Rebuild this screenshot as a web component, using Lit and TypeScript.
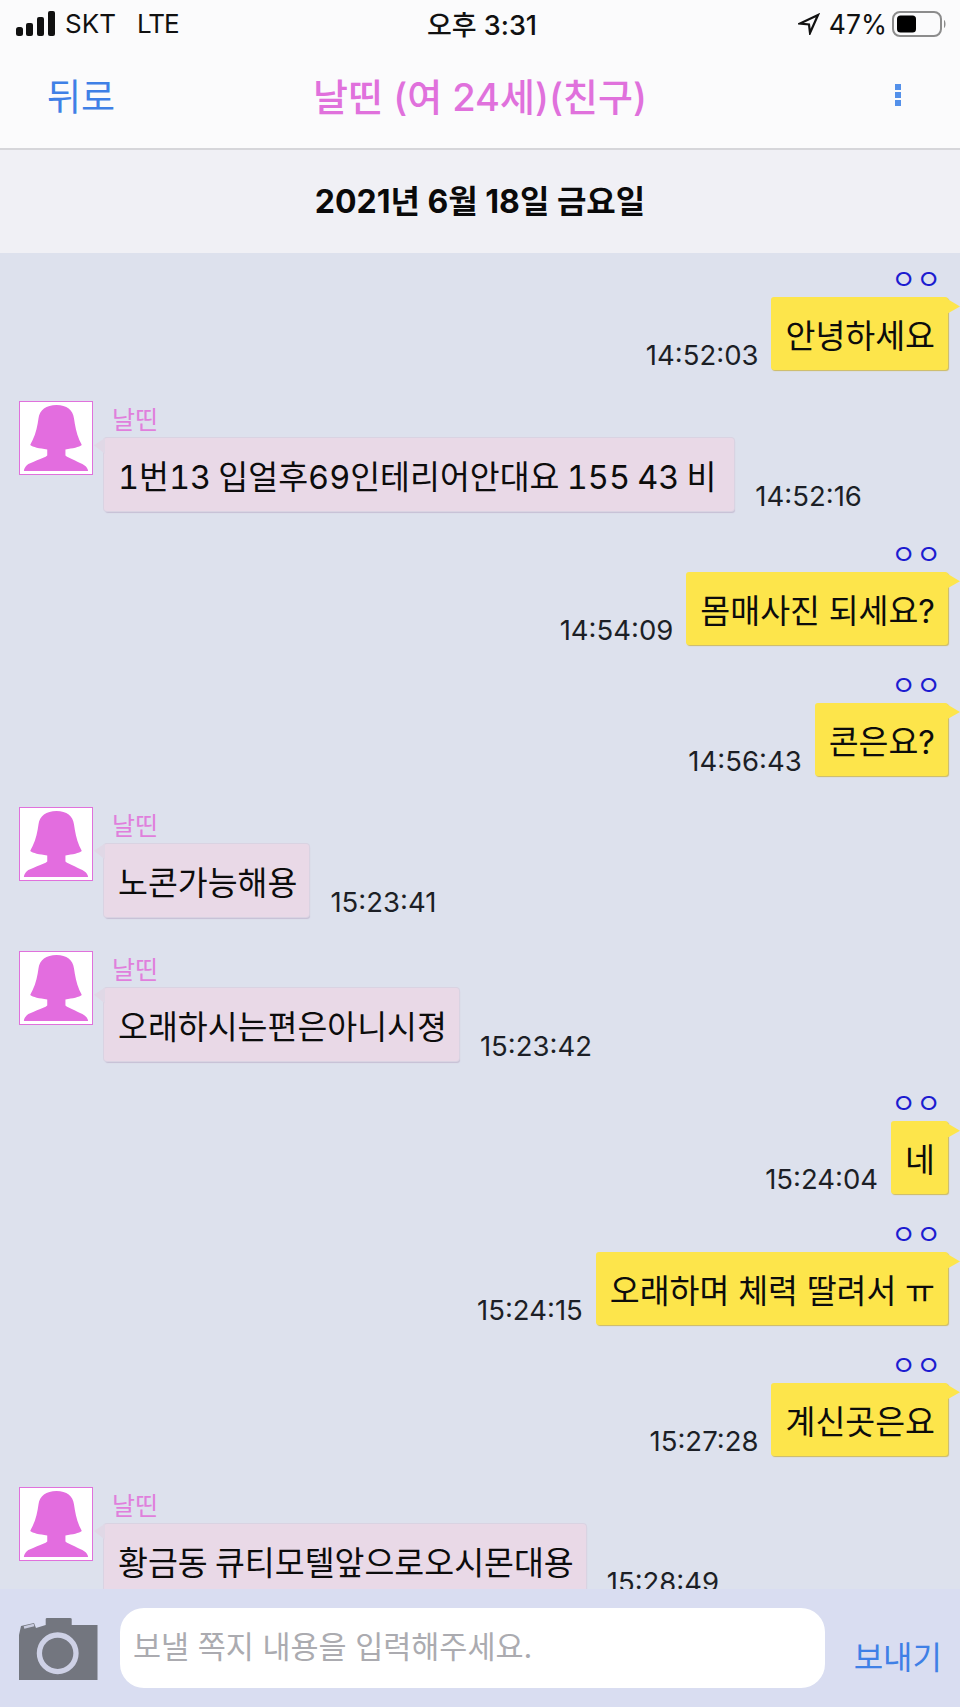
import { LitElement, html, css } from "lit";
import { customElement } from "lit/decorators.js";

type Msg = { me: boolean; text: string; time: string };

const MSGS: Msg[] = [
  { me: true, text: "안녕하세요", time: "14:52:03" },
  { me: false, text: "1번13 입얼후69인테리어안대요 155 43 비\u2009", time: "14:52:16" },
  { me: true, text: "몸매사진 되세요?", time: "14:54:09" },
  { me: true, text: "콘은요?", time: "14:56:43" },
  { me: false, text: "노콘가능해용", time: "15:23:41" },
  { me: false, text: "오래하시는편은아니시졍", time: "15:23:42" },
  { me: true, text: "네", time: "15:24:04" },
  { me: true, text: "오래하며 체력 딸려서 ㅠ", time: "15:24:15" },
  { me: true, text: "계신곳은요", time: "15:27:28" },
  { me: false, text: "황금동 큐티모텔앞으로오시몬대용", time: "15:28:49" },
];

const avatar = html`<svg class="avatar" viewBox="0 0 74 74">
  <path
    d="M37.500 3C27 3 20 8 19 17C18 24 16.500 32 13 39C12 41 11 43 10.500 44.300C13 46.500 20 48 28 48.700V55C25 58 10 62 7 65C5 67 4 69 4 71H70C70 69 68 66 66 65C62 62 50 58 46.700 55V48.700C54 48 61 46.500 63.500 44.300C63 43 62 41 61 39C58 32 56.500 24 55.500 17C54.500 8 48 3 37.500 3Z"
  />
</svg>`;

@customElement("app-root")
export class AppRoot extends LitElement {
  static styles = css`
    :host {
      display: block;
      width: 960px;
      height: 1707px;
      overflow: hidden;
      font-family: "Inter", "Noto Sans CJK KR", sans-serif;
      color: #111;
    }
    .page {
      height: 1707px;
      display: flex;
      flex-direction: column;
      background: #dde1ed;
    }
    .status {
      height: 44px;
      flex: none;
      background: #fbfbfc;
      display: grid;
      grid-template-columns: 1fr auto 1fr;
      align-items: center;
      padding: 3px 12px 0 16px;
      box-sizing: border-box;
      font-size: 26px;
      color: #111;
    }
    .st-left {
      display: flex;
      align-items: center;
    }
    .bars {
      width: 40px;
      height: 26px;
      display: block;
      fill: #111;
      margin-right: 9px;
    }
    .carrier {
      width: 72px;
    }
    .lte {
      letter-spacing: -1px;
    }
    .st-time {
      font-weight: 500;
      font-size: 27px;
    }
    .st-right {
      display: flex;
      align-items: center;
      justify-content: flex-end;
    }
    .loc {
      width: 22px;
      height: 22px;
      fill: none;
      stroke: #111;
      stroke-width: 2.2;
      margin-right: 9px;
    }
    .pct {
      font-size: 26.5px;
    }
    .batt {
      width: 56px;
      height: 26px;
      margin-left: 5px;
      display: block;
    }
    .nav {
      height: 106px;
      flex: none;
      background: #fbfbfc;
      display: grid;
      grid-template-columns: 1fr auto 1fr;
      align-items: center;
      padding: 0 47px 3px 47px;
      box-sizing: border-box;
      border-bottom: 2px solid #d6d6da;
    }
    .back {
      color: #3f80e6;
      font-size: 37px;
    }
    .title {
      color: #e071dc;
      font-size: 38px;
      font-weight: 500;
    }
    .dots {
      justify-self: end;
      margin-right: 12px;
      display: flex;
      flex-direction: column;
      gap: 2px;
    }
    .dots i {
      width: 6px;
      height: 6px;
      background: #5390ea;
      display: block;
    }
    .date {
      height: 103px;
      flex: none;
      background: #f0f0f5;
      display: flex;
      align-items: center;
      justify-content: center;
      font-size: 32px;
      font-weight: 700;
      color: #0a0a0a;
      padding-bottom: 6px;
      box-sizing: border-box;
    }
    .msgs {
      flex: 1;
      min-height: 0;
      overflow: hidden;
      display: flex;
      flex-direction: column;
    }
    .sent {
      margin-top: 37.75px;
      display: flex;
      flex-direction: column;
      align-items: flex-end;
      padding-right: 12px;
      flex: none;
    }
    .sent:first-child {
      margin-top: 24px;
    }
    .oo {
      height: 20px;
      line-height: 5px;
      font-size: 27px;
      color: #1c1cd0;
      margin-right: 7px;
    }
    .line {
      display: flex;
      align-items: flex-end;
    }
    .sent .line {
      gap: 13px;
    }
    .time {
      font-size: 27.5px;
      line-height: 32px;
      color: #1c1f26;
      margin-bottom: -1px;
      white-space: nowrap;
    }
    .bubble {
      height: 73px;
      box-sizing: border-box;
      display: flex;
      align-items: center;
      padding: 0 13px 0 14px;
      font-size: 32.5px;
      font-variant-numeric: tabular-nums;
      color: #0c0c0c;
      white-space: pre;
      border-radius: 3px;
      position: relative;
    }
    .sent .bubble {
      background: #fde54b;
      box-shadow: 1px 1px 1px #cdbb62;
    }
    .sent .bubble::after {
      content: "";
      position: absolute;
      left: 100%;
      top: 0;
      margin-left: -4px;
      width: 16px;
      height: 16px;
      background: #fde54b;
      clip-path: polygon(0 0, 100% 60%, 28% 100%, 0 100%);
    }
    .recv {
      margin-top: 31px;
      margin-bottom: 3px;
      padding-left: 19px;
      display: flex;
      flex: none;
      gap: 11px;
      align-items: flex-start;
    }
    .avatar {
      width: 74px;
      height: 74px;
      box-sizing: border-box;
      border: 1.5px solid #e071dc;
      background: #fff;
      fill: #e36ddf;
      display: block;
      flex: none;
    }
    .body {
      display: flex;
      flex-direction: column;
    }
    .name {
      height: 37px;
      line-height: 39px;
      margin-left: 8px;
      font-size: 25px;
      color: #e07fdc;
    }
    .recv .line {
      gap: 21px;
    }
    .recv .bubble {
      background: #e9d9e7;
      box-shadow: 0 0 0 1px #d9d3e2, 1px 2px 1px #c6bfd4;
      padding: 0 12px 0 14px;
      word-spacing: -1.5px;
    }
    .recv .bubble::before {
      content: "";
      position: absolute;
      right: 100%;
      top: 0;
      margin-right: -1px;
      width: 11px;
      height: 16px;
      background: #e0d8e6;
      clip-path: polygon(100% 0, 0 45%, 100% 100%);
    }
    .foot {
      height: 118px;
      flex: none;
      background: #d9ddf1;
      display: flex;
      align-items: center;
      padding: 0 18px 0 18px;
      box-sizing: border-box;
    }
    .cam {
      width: 80px;
      height: 62px;
      flex: none;
      display: block;
      margin-top: 1px;
      filter: blur(0.5px);
    }
    .input {
      width: 705px;
      height: 80px;
      margin-left: 22px;
      box-sizing: border-box;
      background: #fff;
      border-radius: 24px;
      display: flex;
      align-items: center;
      padding: 0 0 6px 13px;
      font-size: 30.5px;
      color: #ababb0;
    }
    .send {
      margin-left: auto;
      font-size: 32px;
      color: #3f80e6;
      margin-top: 14px;
    }
  `;

  renderMsg(m: Msg) {
    if (m.me) {
      return html`<div class="sent">
        <div class="oo">ㅇㅇ</div>
        <div class="line">
          <span class="time">${m.time}</span>
          <div class="bubble">${m.text}</div>
        </div>
      </div>`;
    }
    return html`<div class="recv">
      ${avatar}
      <div class="body">
        <div class="name">날띤</div>
        <div class="line">
          <div class="bubble">${m.text}</div>
          <span class="time">${m.time}</span>
        </div>
      </div>
    </div>`;
  }

  render() {
    return html`<div class="page">
      <div class="status">
        <div class="st-left">
          <svg class="bars" viewBox="0 0 40 26">
            <rect x="0" y="16" width="7" height="9" rx="2.5" />
            <rect x="10" y="12" width="7" height="13" rx="2" />
            <rect x="21" y="6" width="7" height="19" rx="2" />
            <rect x="32" y="0" width="7" height="25" rx="2" />
          </svg>
          <span class="carrier">SKT</span><span class="lte">LTE</span>
        </div>
        <div class="st-time">오후 3:31</div>
        <div class="st-right">
          <svg class="loc" viewBox="0 0 22 22"><path d="M20 2L2 10.5L11 11.5L12 20Z" /></svg>
          <span class="pct">47%</span>
          <svg class="batt" viewBox="0 0 56 26">
            <rect x="1" y="1" width="48" height="24" rx="7" fill="none" stroke="#8c8c8c" stroke-width="2" />
            <rect x="5" y="4.500" width="19" height="17" rx="3.500" fill="#000" />
            <path d="M52 9C54 10 54 16 52 17Z" fill="#8c8c8c" />
          </svg>
        </div>
      </div>
      <div class="nav">
        <div class="back">뒤로</div>
        <div class="title">날띤 (여 24세)(친구)</div>
        <div class="dots"><i></i><i></i><i></i></div>
      </div>
      <div class="date">2021년 6월 18일 금요일</div>
      <div class="msgs">${MSGS.map((m) => this.renderMsg(m))}</div>
      <div class="foot">
        <svg class="cam" viewBox="0 0 80 62">
          <path d="M1 17L3 8L16 5L18 10L27.700 7V1Q27.700 0 29 0H52Q53.700 0 53.700 1V7H79.500V62H1Z" fill="#73767f" />
          <path d="M6 9.500L16 7" stroke="#c9cce0" stroke-width="2.500" />
          <circle cx="39.700" cy="35.300" r="18.300" fill="none" stroke="#ced1e6" stroke-width="5.300" />
        </svg>
        <div class="input">보낼 쪽지 내용을 입력해주세요.</div>
        <div class="send">보내기</div>
      </div>
    </div>`;
  }
}
